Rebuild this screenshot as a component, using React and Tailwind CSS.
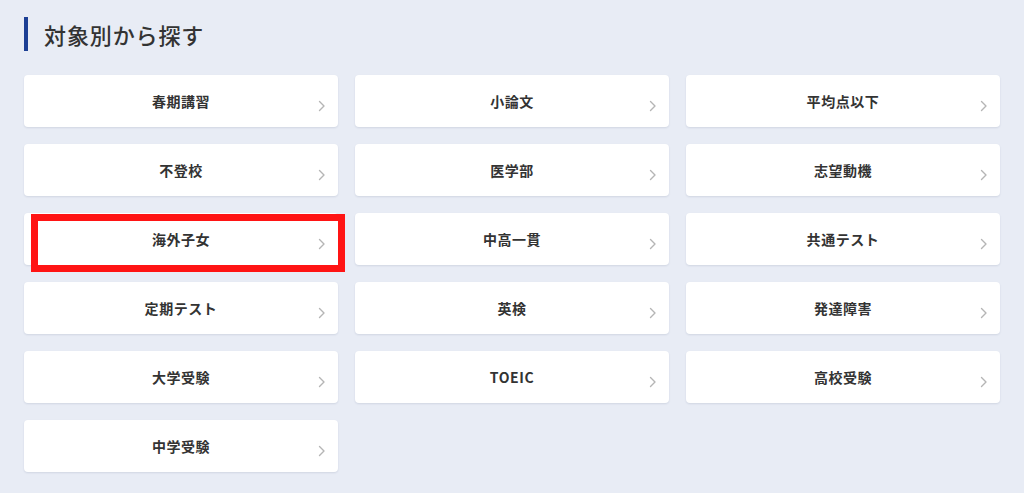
const items = [
  "春期講習", "小論文", "平均点以下",
  "不登校", "医学部", "志望動機",
  "海外子女", "中高一貫", "共通テスト",
  "定期テスト", "英検", "発達障害",
  "大学受験", "TOEIC", "高校受験",
  "中学受験",
];

function Card({ label, highlighted }) {
  return (
    <div className="relative h-[52px] bg-white rounded-[4px] shadow-[0_1px_2px_rgba(40,60,100,0.12)] flex items-center justify-center">
      {highlighted && (
        <div className="absolute left-[7px] top-[1px] w-[314px] h-[58px] border-[7px] border-[#ff1414] bg-white" />
      )}
      <span className="relative z-10 text-[14px] font-bold text-[#333] tracking-[0.04em]">{label}</span>
      <svg width="8" height="12" viewBox="0 0 8 12" fill="none" className="absolute z-10 right-[12px] top-[25px]">
        <path d="M1.5 1.5 L6 6 L1.5 10.5" stroke="#b5b5b5" strokeWidth="1.4" strokeLinecap="round" strokeLinejoin="round" />
      </svg>
    </div>
  );
}

export default function App() {
  return (
    <div
      className="w-[1024px] h-[493px] bg-[#e8ecf5] px-[24px] pt-[17px] overflow-hidden"
      style={{ fontFamily: '"Noto Sans CJK JP", "Noto Sans", sans-serif' }}
    >
      <div className="flex items-center h-[34px]">
        <div className="w-[4px] h-[34px] bg-[#1c3f94]" />
        <h2 className="ml-[16px] text-[22px] font-medium text-[#333] tracking-[0.04em] leading-none">対象別から探す</h2>
      </div>
      <div className="mt-[24px] grid grid-cols-3 gap-x-[17px] gap-y-[17px] w-[976px]">
        {items.map((label) => (
          <Card key={label} label={label} highlighted={label === "海外子女"} />
        ))}
      </div>
    </div>
  );
}
